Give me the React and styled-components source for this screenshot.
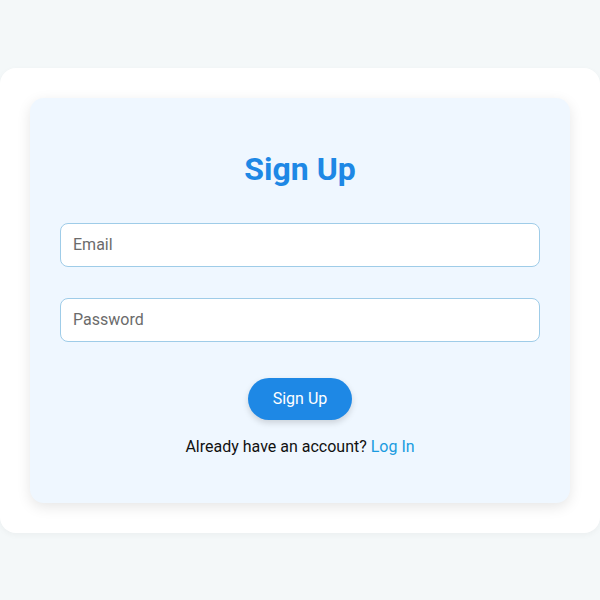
import React from 'react'
import styled, { createGlobalStyle } from 'styled-components'

const Global = createGlobalStyle`
  body {
    margin: 0;
    background: #f4f8f9;
    font-family: Roboto, "Liberation Sans", sans-serif;
  }
`

const Page = styled.div`
  width: 600px;
  height: 600px;
  display: flex;
  align-items: center;
  justify-content: center;
`

const Outer = styled.div`
  width: 600px;
  box-sizing: border-box;
  padding: 30px;
  background: #ffffff;
  border-radius: 16px;
  box-shadow: 0 2px 6px rgba(0, 0, 0, 0.04);
`

const Card = styled.div`
  background: #eff7ff;
  border-radius: 14px;
  box-shadow: 0 4px 14px rgba(0, 0, 0, 0.1);
  padding: 50px 30px 47px;
  display: flex;
  flex-direction: column;
  align-items: center;
`

const Title = styled.h2`
  margin: 0 0 33px;
  font-size: 32px;
  line-height: 42px;
  font-weight: 700;
  color: #1e88e5;
`

const Input = styled.input`
  width: 100%;
  box-sizing: border-box;
  height: 44px;
  padding: 0 12px;
  margin-bottom: ${p => p.$gap}px;
  border: 1px solid #9fcce8;
  border-radius: 8px;
  background: #ffffff;
  font-family: inherit;
  font-size: 16px;
  color: #333;
  outline: none;
  &::placeholder {
    color: #6b6b6b;
  }
`

const Button = styled.button`
  width: 104px;
  height: 42px;
  border: none;
  border-radius: 21px;
  background: #1e88e5;
  color: #ffffff;
  font-family: inherit;
  font-size: 16px;
  box-shadow: 0 3px 6px rgba(0, 0, 0, 0.15);
  cursor: pointer;
`

const Note = styled.p`
  margin: 17px 0 0;
  font-size: 16px;
  line-height: 19px;
  color: #111;
`

const Link = styled.a`
  color: #1a9be0;
  text-decoration: none;
`

export default function App() {
  return (
    <>
      <Global />
      <Page>
        <Outer>
          <Card>
            <Title>Sign Up</Title>
            <Input type="email" placeholder="Email" $gap={31} />
            <Input type="password" placeholder="Password" $gap={36} />
            <Button>Sign Up</Button>
            <Note>
              Already have an account? <Link href="#">Log In</Link>
            </Note>
          </Card>
        </Outer>
      </Page>
    </>
  )
}
